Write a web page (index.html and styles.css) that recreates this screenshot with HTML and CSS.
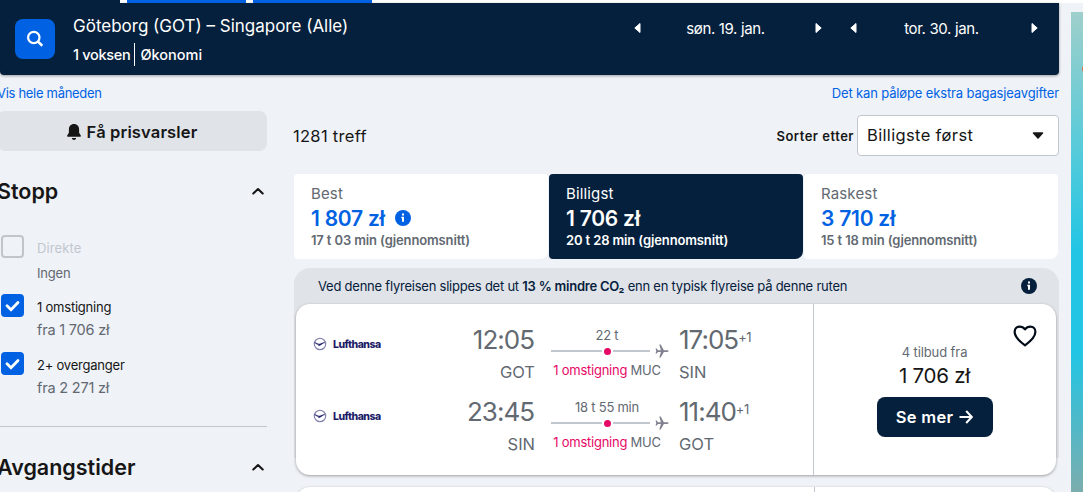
FILE: index.html
```html
<!DOCTYPE html>
<html lang="no">
<head>
  <meta charset="UTF-8">
  <meta name="viewport" content="width=device-width, initial-scale=1.0">
  <title>Göteborg – Singapore</title>
  <link rel="stylesheet" href="styles.css">
</head>
<body>

  <!-- icons used more than once -->
  <svg class="sprite">
    <symbol id="plane" viewBox="0 0 24 24">
      <path d="M23.5 12c0 .9-1.600 1.500-3 1.500h-5.300L9.800 23H7.400l2.700-9.500H5L3 16.300H.9L2.200 12 .9 7.700H3l2 2.800h5.100L7.400 1h2.400l5.400 9.500h5.300c1.400 0 3 .6 3 1.500z"/>
    </symbol>
    <symbol id="chevron" viewBox="0 0 12 8">
      <path d="M1.300 6.500 6 2l4.700 4.500" fill="none" stroke="#161616" stroke-width="2.100" stroke-linecap="round" stroke-linejoin="round"/>
    </symbol>
    <symbol id="info" viewBox="0 0 16 16">
      <circle cx="8" cy="8" r="8"/>
      <path d="M7 3.500h2v2H7zM6.300 6.800H9v5H7V8.200h-.7z" fill="#fff"/>
    </symbol>
    <symbol id="crane" viewBox="0 0 14 14">
      <circle cx="7" cy="7" r="5.700" fill="none" stroke="#8585b0" stroke-width="1.200"/>
      <path d="M1.500 5.600c2 .2 3 1.500 4.800 1.400 1.500 0 2.500-1.500 5.700-1.500-2 .6-3 1.800-4.200 2.400-1 .5-1.600.4-2.300 1 .1-.5.3-.8.6-1.100-2-.1-3-1.200-4.600-2.200z" fill="#1c1c68" stroke="#1c1c68" stroke-width=".4"/>
    </symbol>
  </svg>

  <div class="tabs">
    <div class="tab-start"></div>
    <div class="tab tab-blue"></div>
    <div class="tab tab-blue"></div>
  </div>

  <header class="search-bar">
    <button class="search-btn">
      <svg width="18" height="18" viewBox="0 0 18 18" fill="none" stroke="#fff" stroke-width="2.200"><circle cx="7.800" cy="7.500" r="5.700"/><path d="M12 11.600l4.300 4.200" stroke-width="2.600"/></svg>
    </button>
    <div class="route">
      <div class="route-name">Göteborg (GOT) – Singapore (Alle)</div>
      <div class="route-info"><span class="voksen">1 voksen</span><span class="klasse">Økonomi</span></div>
    </div>
    <div class="date">
      <svg width="7" height="10" viewBox="0 0 7 10"><path d="M6 .5v9L.8 5z" fill="#fff" stroke="#fff" stroke-linejoin="round"/></svg>
      <span>søn. 19. jan.</span>
      <svg width="7" height="10" viewBox="0 0 7 10"><path d="M1 .5v9L6.200 5z" fill="#fff" stroke="#fff" stroke-linejoin="round"/></svg>
    </div>
    <div class="date">
      <svg width="7" height="10" viewBox="0 0 7 10"><path d="M6 .5v9L.8 5z" fill="#fff" stroke="#fff" stroke-linejoin="round"/></svg>
      <span>tor. 30. jan.</span>
      <svg width="7" height="10" viewBox="0 0 7 10"><path d="M1 .5v9L6.200 5z" fill="#fff" stroke="#fff" stroke-linejoin="round"/></svg>
    </div>
  </header>

  <div class="links">
    <a class="link-month">Vis hele måneden</a>
    <a class="link-bags">Det kan påløpe ekstra bagasjeavgifter</a>
  </div>

  <div class="page">
    <aside class="filters">
      <button class="alert-btn">
        <svg width="14" height="16" viewBox="0 0 14 16" fill="#161616"><path d="M7 0C3.800 0 1.900 2.300 1.900 5.300v3.500L.2 11.600c-.3.600 0 1.100.6 1.100h12.400c.6 0 .9-.5.6-1.100l-1.700-2.800V5.300C12.100 2.300 10.200 0 7 0zM4.800 14h4.400c-.3 1.200-1 1.900-2.200 1.900S5.100 15.200 4.800 14z"/></svg>
        <span>Få prisvarsler</span>
      </button>
      <div class="filter-head">
        <h2>Stopp</h2>
        <svg width="12" height="8"><use href="#chevron"/></svg>
      </div>
      <div class="option option-off">
        <span class="box"></span>
        <div class="option-text"><span class="name">Direkte</span><span class="sub sub-small">Ingen</span></div>
      </div>
      <div class="option">
        <span class="box checked"><svg width="15" height="12" viewBox="0 0 15 12"><path d="M2 5.800l4 3.900 7-7.200" fill="none" stroke="#fff" stroke-width="2.800" stroke-linecap="round"/></svg></span>
        <div class="option-text"><span class="name">1 omstigning</span><span class="sub">fra 1 706 zł</span></div>
      </div>
      <div class="option">
        <span class="box checked"><svg width="15" height="12" viewBox="0 0 15 12"><path d="M2 5.800l4 3.900 7-7.200" fill="none" stroke="#fff" stroke-width="2.800" stroke-linecap="round"/></svg></span>
        <div class="option-text"><span class="name">2+ overganger</span><span class="sub">fra 2 271 zł</span></div>
      </div>
      <div class="filter-head filter-next">
        <h2>Avgangstider</h2>
        <svg width="12" height="8"><use href="#chevron"/></svg>
      </div>
    </aside>

    <main class="results">
      <div class="sort-row">
        <span class="count">1281 treff</span>
        <span class="sort-label">Sorter etter</span>
        <div class="select">
          <span>Billigste først</span>
          <svg width="12" height="7" viewBox="0 0 12 7"><path d="M1.500 1h9L6 6z" fill="#161616" stroke="#161616" stroke-width="1.500" stroke-linejoin="round"/></svg>
        </div>
      </div>

      <div class="sort-tabs">
        <div class="sort-tab">
          <span class="tab-name">Best</span>
          <span class="tab-price">1 807 zł<svg width="16" height="16" fill="#0062e3"><use href="#info"/></svg></span>
          <span class="tab-time">17 t 03 min (gjennomsnitt)</span>
        </div>
        <div class="sort-tab active">
          <span class="tab-name">Billigst</span>
          <span class="tab-price">1 706 zł</span>
          <span class="tab-time">20 t 28 min (gjennomsnitt)</span>
        </div>
        <div class="sort-tab">
          <span class="tab-name">Raskest</span>
          <span class="tab-price">3 710 zł</span>
          <span class="tab-time">15 t 18 min (gjennomsnitt)</span>
        </div>
      </div>

      <div class="eco">
        <div class="eco-bar">
          <span>Ved denne flyreisen slippes det ut <b>13 % mindre CO₂</b> enn en typisk flyreise på denne ruten</span>
          <svg width="16" height="16" fill="#05203c"><use href="#info"/></svg>
        </div>
        <div class="ticket">
          <div class="legs">
            <div class="leg">
              <div class="airline"><svg width="14" height="14"><use href="#crane"/></svg><span>Lufthansa</span></div>
              <div class="depart"><span class="time">12:05</span><span class="code">GOT</span></div>
              <div class="stops">
                <span class="duration">22 t</span>
                <div class="line"><i></i><b></b><i></i><svg width="14" height="14" fill="#81808f"><use href="#plane"/></svg></div>
                <span class="via"><em>1 omstigning</em> MUC</span>
              </div>
              <div class="arrive"><span class="time">17:05<sup>+1</sup></span><span class="code">SIN</span></div>
            </div>
            <div class="leg">
              <div class="airline"><svg width="14" height="14"><use href="#crane"/></svg><span>Lufthansa</span></div>
              <div class="depart"><span class="time">23:45</span><span class="code">SIN</span></div>
              <div class="stops">
                <span class="duration">18 t 55 min</span>
                <div class="line"><i></i><b></b><i></i><svg width="14" height="14" fill="#81808f"><use href="#plane"/></svg></div>
                <span class="via"><em>1 omstigning</em> MUC</span>
              </div>
              <div class="arrive"><span class="time">11:40<sup>+1</sup></span><span class="code">GOT</span></div>
            </div>
          </div>
          <div class="offer">
            <svg class="heart" width="24" height="22" viewBox="0 0 24 22"><path d="M12 20.300C8.500 17.800 1.600 12.500 1.600 6.800c0-3.100 2.200-5.200 5-5.200 2.300 0 4.100 1 5.400 2.700 1.300-1.700 3.100-2.700 5.400-2.700 2.800 0 5 2.100 5 5.200 0 5.700-6.900 11-10.400 13.500z" fill="none" stroke="#000b18" stroke-width="2.200" stroke-linejoin="round"/></svg>
            <span class="offer-count">4 tilbud fra</span>
            <span class="offer-price">1 706 zł</span>
            <button class="more-btn"><span>Se mer</span><svg width="14" height="14" viewBox="0 0 14 14"><path d="M.5 7h12M7.200 1l5.600 6-5.600 6" fill="none" stroke="#fff" stroke-width="2"/></svg></button>
          </div>
        </div>
      </div>
      <div class="ticket ticket-next"><div class="legs"></div></div>
    </main>
  </div>

  <div class="ad"><div class="ad-dot"></div></div>

</body>
</html>
```

FILE: styles.css
```css
* {
  box-sizing: border-box;
}

body {
  margin: 0;
  height: 492px;
  overflow: hidden;
  position: relative;
  background: #eff2f7;
  color: #161616;
  font-family: Inter, "Noto Sans", sans-serif;
  font-size: 14px;
}

button {
  border: none;
  padding: 0;
  font-family: inherit;
}

h2 {
  margin: 0;
}

span {
  white-space: nowrap;
}

svg {
  display: block;
  flex-shrink: 0;
}

.sprite {
  display: none;
}

.tabs {
  display: flex;
  gap: 7px;
  height: 3px;
  background: #fff;
}

.tab-start {
  width: 120px;
  background: #05203c;
}

.tab-blue {
  width: 119px;
  background: #0062e3;
}

/* search bar */
.search-bar {
  display: flex;
  width: 1059px;
  height: 72px;
  padding-left: 15px;
  background: #05203c;
  border-radius: 0 0 4px 4px;
  box-shadow: 0 1px 3px rgba(37, 32, 31, 0.4);
  color: #fff;
}

.search-btn {
  display: flex;
  align-items: center;
  justify-content: center;
  width: 40px;
  height: 40px;
  margin: 16px 18px 0 0;
  background: #0062e3;
  border-radius: 8px;
}

.route {
  width: 557px;
  padding-top: 12px;
}

.route-name {
  font-size: 17px;
  line-height: 22px;
}

.route-info {
  display: flex;
  margin-top: 6px;
  font-size: 14.5px;
  font-weight: 500;
  line-height: 23px;
  letter-spacing: -0.3px;
}

.voksen {
  padding-right: 4px;
  border-right: 1px solid #fff;
}

.klasse {
  padding-left: 5px;
  letter-spacing: 0;
}

.date {
  display: flex;
  align-items: center;
  justify-content: space-between;
  width: 188px;
  height: 20px;
  margin: 15px 28px 0 4px;
  font-size: 15px;
  letter-spacing: -0.35px;
}

.date span {
  margin-left: -5px;
}

.date + .date {
  margin-right: 0;
  margin-left: 0;
}

.links {
  display: flex;
  justify-content: space-between;
  width: 1059px;
  height: 36px;
  padding-top: 9px;
  color: #0062e3;
  font-size: 13px;
  line-height: 18px;
  letter-spacing: -0.14px;
}

.link-month {
  margin-left: -3px;
  letter-spacing: -0.3px;
}

.page {
  display: flex;
  width: 1059px;
}

/* filters */
.filters {
  width: 267px;
  margin-right: 27px;
}

.alert-btn {
  display: flex;
  align-items: center;
  justify-content: center;
  gap: 6px;
  width: 270px;
  height: 40px;
  margin-left: -3px;
  padding-top: 1px;
  background: #e0e3e8;
  border-radius: 8px;
  color: #161616;
  font-size: 16.5px;
  font-weight: 600;
  letter-spacing: 0.15px;
}

.filter-head {
  display: flex;
  align-items: center;
  justify-content: space-between;
  height: 28px;
  margin: 26px 3px 42px -3px;
}

.filter-head h2 {
  font-size: 21.5px;
  font-weight: 600;
}

.option {
  display: flex;
  height: 58px;
  padding-left: 1px;
}

.option-off {
  height: 59px;
  margin-top: -24px;
}

.box {
  display: flex;
  align-items: center;
  justify-content: center;
  width: 23px;
  height: 23px;
  margin: 12px 13px 0 0;
  border-radius: 4px;
}

.option-off .box {
  border: 2px solid #c1c4c9;
}

.checked {
  background: #0062e3;
}

.option-text {
  display: flex;
  flex-direction: column;
  padding-top: 15px;
}

.name {
  font-size: 13px;
  line-height: 20px;
  letter-spacing: -0.22px;
}

.option-off .name {
  color: #c1c7cf;
  letter-spacing: 0.1px;
}

.sub {
  color: #626971;
  font-size: 14.5px;
  line-height: 25px;
  letter-spacing: -0.2px;
}

.sub-small {
  font-size: 13px;
  line-height: 30px;
}

.filter-next {
  height: 81px;
  margin-top: 28px;
  margin-bottom: 0;
  margin-right: 0;
  padding-right: 3px;
  border-top: 1px solid #c1c7cf;
}

/* results */
.results {
  width: 765px;
}

.sort-row {
  display: flex;
  align-items: center;
  height: 48px;
}

.count {
  flex: 1;
  margin-left: -1px;
  padding-top: 2px;
  font-size: 16.5px;
  letter-spacing: 0.3px;
}

.sort-label {
  margin-right: 3px;
  padding-top: 1px;
  font-size: 13px;
  font-weight: 600;
  letter-spacing: 0.5px;
}

.select {
  display: flex;
  align-items: center;
  justify-content: space-between;
  width: 202px;
  height: 41px;
  padding: 0 14px 0 9px;
  background: #fff;
  border: 1px solid #c1c7cf;
  border-radius: 4px;
  font-size: 16.5px;
  letter-spacing: 0.35px;
}

.sort-tabs {
  display: flex;
  gap: 1px;
  margin-top: 15px;
}

.sort-tab {
  display: flex;
  flex-direction: column;
  width: 254px;
  height: 85px;
  padding: 10px 17px;
  background: #fff;
  border-radius: 4px 4px 8px 4px;
  color: #626971;
}

.tab-name {
  font-size: 15px;
  line-height: 20px;
  letter-spacing: 0.15px;
}

.tab-price {
  display: flex;
  align-items: center;
  gap: 10px;
  height: 28px;
  padding-top: 1px;
  color: #0062e3;
  font-size: 21px;
  font-weight: 600;
  letter-spacing: -0.25px;
}

.tab-time {
  font-size: 13px;
  font-weight: 600;
  line-height: 18px;
  letter-spacing: -0.13px;
}

.active,
.active .tab-price {
  background: #05203c;
  color: #fff;
}

.eco {
  height: 208px;
  margin-top: 9px;
  background: linear-gradient(#e0e3e8 190px, #eff2f7 190px);
  border-radius: 16px 16px 0 0;
}

.eco-bar {
  display: flex;
  align-items: center;
  justify-content: space-between;
  height: 36px;
  padding: 0 22px 0 24px;
  color: #05203c;
  font-size: 13px;
  letter-spacing: -0.23px;
}

.eco-bar b {
  font-weight: 600;
}

.ticket {
  display: flex;
  width: 760px;
  height: 171px;
  margin-left: 2px;
  background: #fff;
  border-radius: 14px;
  box-shadow: 0 1px 3px rgba(37, 32, 31, 0.4);
}

.legs {
  width: 518px;
  padding: 20px 0 0 17px;
  border-right: 1px solid #c1c7cf;
}

.leg {
  display: flex;
  height: 72px;
}

.airline {
  display: flex;
  align-items: center;
  gap: 6px;
  width: 100px;
  height: 40px;
  color: #1c1c68;
  font-size: 10.5px;
  font-weight: 800;
  letter-spacing: -0.5px;
}

.depart {
  display: flex;
  flex-direction: column;
  align-items: flex-end;
  width: 122px;
}

.time {
  color: #626971;
  font-size: 26px;
  line-height: 32px;
  letter-spacing: -1px;
}

.depart .time {
  margin-right: 1px;
}

.time sup {
  font-size: 13px;
  line-height: 0;
  letter-spacing: -0.5px;
  vertical-align: 7px;
}

.code {
  color: #626971;
  font-size: 16.5px;
  line-height: 32px;
}

.stops {
  display: flex;
  flex-direction: column;
  align-items: center;
  width: 112px;
  margin: 0 16px;
  color: #626971;
  font-size: 13px;
  letter-spacing: -0.25px;
}

.duration {
  height: 20px;
  line-height: 23px;
}

.line {
  display: flex;
  align-items: center;
  width: 119px;
  height: 14px;
  margin-left: 7px;
}

.line i {
  width: 51px;
  height: 2px;
  background: #c1c7cf;
}

.line i + b + i {
  width: 37px;
}

.line b {
  width: 7px;
  height: 7px;
  margin: 1px 2px 0;
  background: #e70866;
  border-radius: 50%;
}

.line svg {
  margin-left: 5px;
}

.via {
  line-height: 25px;
}

.via em {
  color: #e70866;
  font-style: normal;
}

.arrive {
  display: flex;
  flex-direction: column;
}

.offer {
  display: flex;
  flex-direction: column;
  align-items: center;
  flex: 1;
  position: relative;
  padding: 39px 1px 0 0;
}

.heart {
  position: absolute;
  top: 21px;
  right: 19px;
}

.offer-count {
  color: #626971;
  font-size: 13px;
  line-height: 19px;
  letter-spacing: -0.1px;
}

.offer-price {
  font-size: 20.5px;
  line-height: 28px;
  letter-spacing: -0.25px;
}

.more-btn {
  display: flex;
  align-items: center;
  justify-content: center;
  gap: 6px;
  width: 116px;
  height: 40px;
  margin-top: 7px;
  background: #05203c;
  border-radius: 8px;
  color: #fff;
  font-size: 16.5px;
  font-weight: 600;
  letter-spacing: 0.3px;
}

.ticket-next {
  margin-top: 11px;
}

.ticket-next .legs {
  width: 519px;
}

/* banner sticking in from the right */
.ad {
  position: absolute;
  top: 12px;
  right: 0;
  width: 12px;
  height: 480px;
  overflow: hidden;
  background: linear-gradient(#9fcfcb, #50cadb 150px, #22c5e4 240px, #22c5e4 340px, #7badae 480px);
}

.ad-dot {
  width: 10px;
  height: 10px;
  margin: 52px 0 0 11px;
  background: #e8683c;
  border-radius: 50%;
}
```
